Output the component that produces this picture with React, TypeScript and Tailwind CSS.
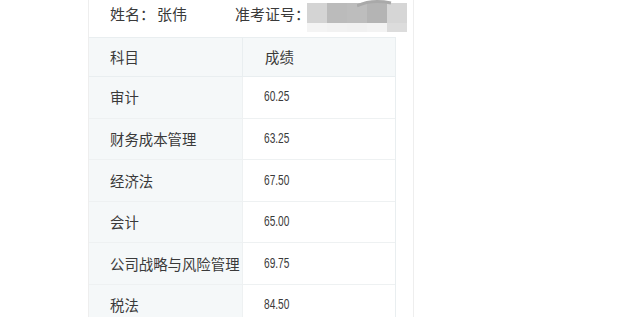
import React from "react"

const scores = [
  { subject: "审计", score: "60.25" },
  { subject: "财务成本管理", score: "63.25" },
  { subject: "经济法", score: "67.50" },
  { subject: "会计", score: "65.00" },
  { subject: "公司战略与风险管理", score: "69.75" },
  { subject: "税法", score: "84.50" },
]

const mosaicTop = ["bg-[#d4d4d4]", "bg-[#bbbbbb]", "bg-[#bdbdbd]", "bg-[#b4b4b4]", "bg-[#d6d6d6]"]
const mosaicBottom = ["bg-[#f4f4f4]", "bg-[#f2f2f2]", "bg-[#f1f1f1]", "bg-[#f3f3f3]", "bg-[#dcdcdc]"]

const Mosaic = () => (
  <div className="relative mt-[3px] flex h-[29px] w-[100px] shrink-0 flex-col">
    <div className="flex h-[20px]">
      {mosaicTop.map((c, i) => (
        <div key={i} className={`h-full w-[20px] ${c}`} />
      ))}
    </div>
    <div className="flex h-[9px]">
      {mosaicBottom.map((c, i) => (
        <div key={i} className={`h-full w-[20px] ${c}`} />
      ))}
    </div>
    <svg className="absolute left-[50px] top-[-3px]" width="40" height="8" viewBox="0 0 40 8">
      <path d="M0 6 Q 14 -1 34 3" stroke="#a9a9a9" strokeWidth="3" fill="none" />
    </svg>
  </div>
)

export default function App() {
  return (
    <div
      className="h-[317px] w-[625px] overflow-hidden bg-white text-[#3a3a3a]"
      style={{ fontFamily: '"Noto Sans CJK SC", "Liberation Sans", sans-serif' }}
    >
      <div className="ml-[88px] h-full w-[326px] border-x border-[#eeeeee]">
        <div className="flex h-[37px] items-start whitespace-nowrap pl-[21px] text-[15px]">
          <span className="mt-[4px] w-[47px] shrink-0 leading-[20px]">姓名：</span>
          <span className="mt-[4px] w-[78px] shrink-0 leading-[20px]">张伟</span>
          <span className="mt-[4px] w-[72px] shrink-0 leading-[20px]">准考证号：</span>
          <Mosaic />
        </div>
        <div className="w-[307px] border-r border-[#e9eef0] text-[14.4px]">
          <div className="flex h-[40px] border-y border-[#e9eef0] bg-[#f5f8f9]">
            <div className="flex w-[154px] items-center border-r border-[#e9eef0] pl-[21px]">科目</div>
            <div className="flex flex-1 items-center pl-[22px]">成绩</div>
          </div>
          {scores.map((row) => (
            <div key={row.subject} className="flex h-[41.6px] border-b border-[#eef1f2]">
              <div className="flex w-[154px] items-center whitespace-nowrap border-r border-[#eef1f2] bg-[#f5f8f9] pl-[21px]">
                {row.subject}
              </div>
              <div className="flex flex-1 items-center pl-[21px]">
                <span
                  className="inline-block origin-left scale-x-[0.7] text-[14.5px]"
                  style={{ fontFamily: '"Liberation Sans", sans-serif' }}
                >
                  {row.score}
                </span>
              </div>
            </div>
          ))}
        </div>
      </div>
    </div>
  )
}
